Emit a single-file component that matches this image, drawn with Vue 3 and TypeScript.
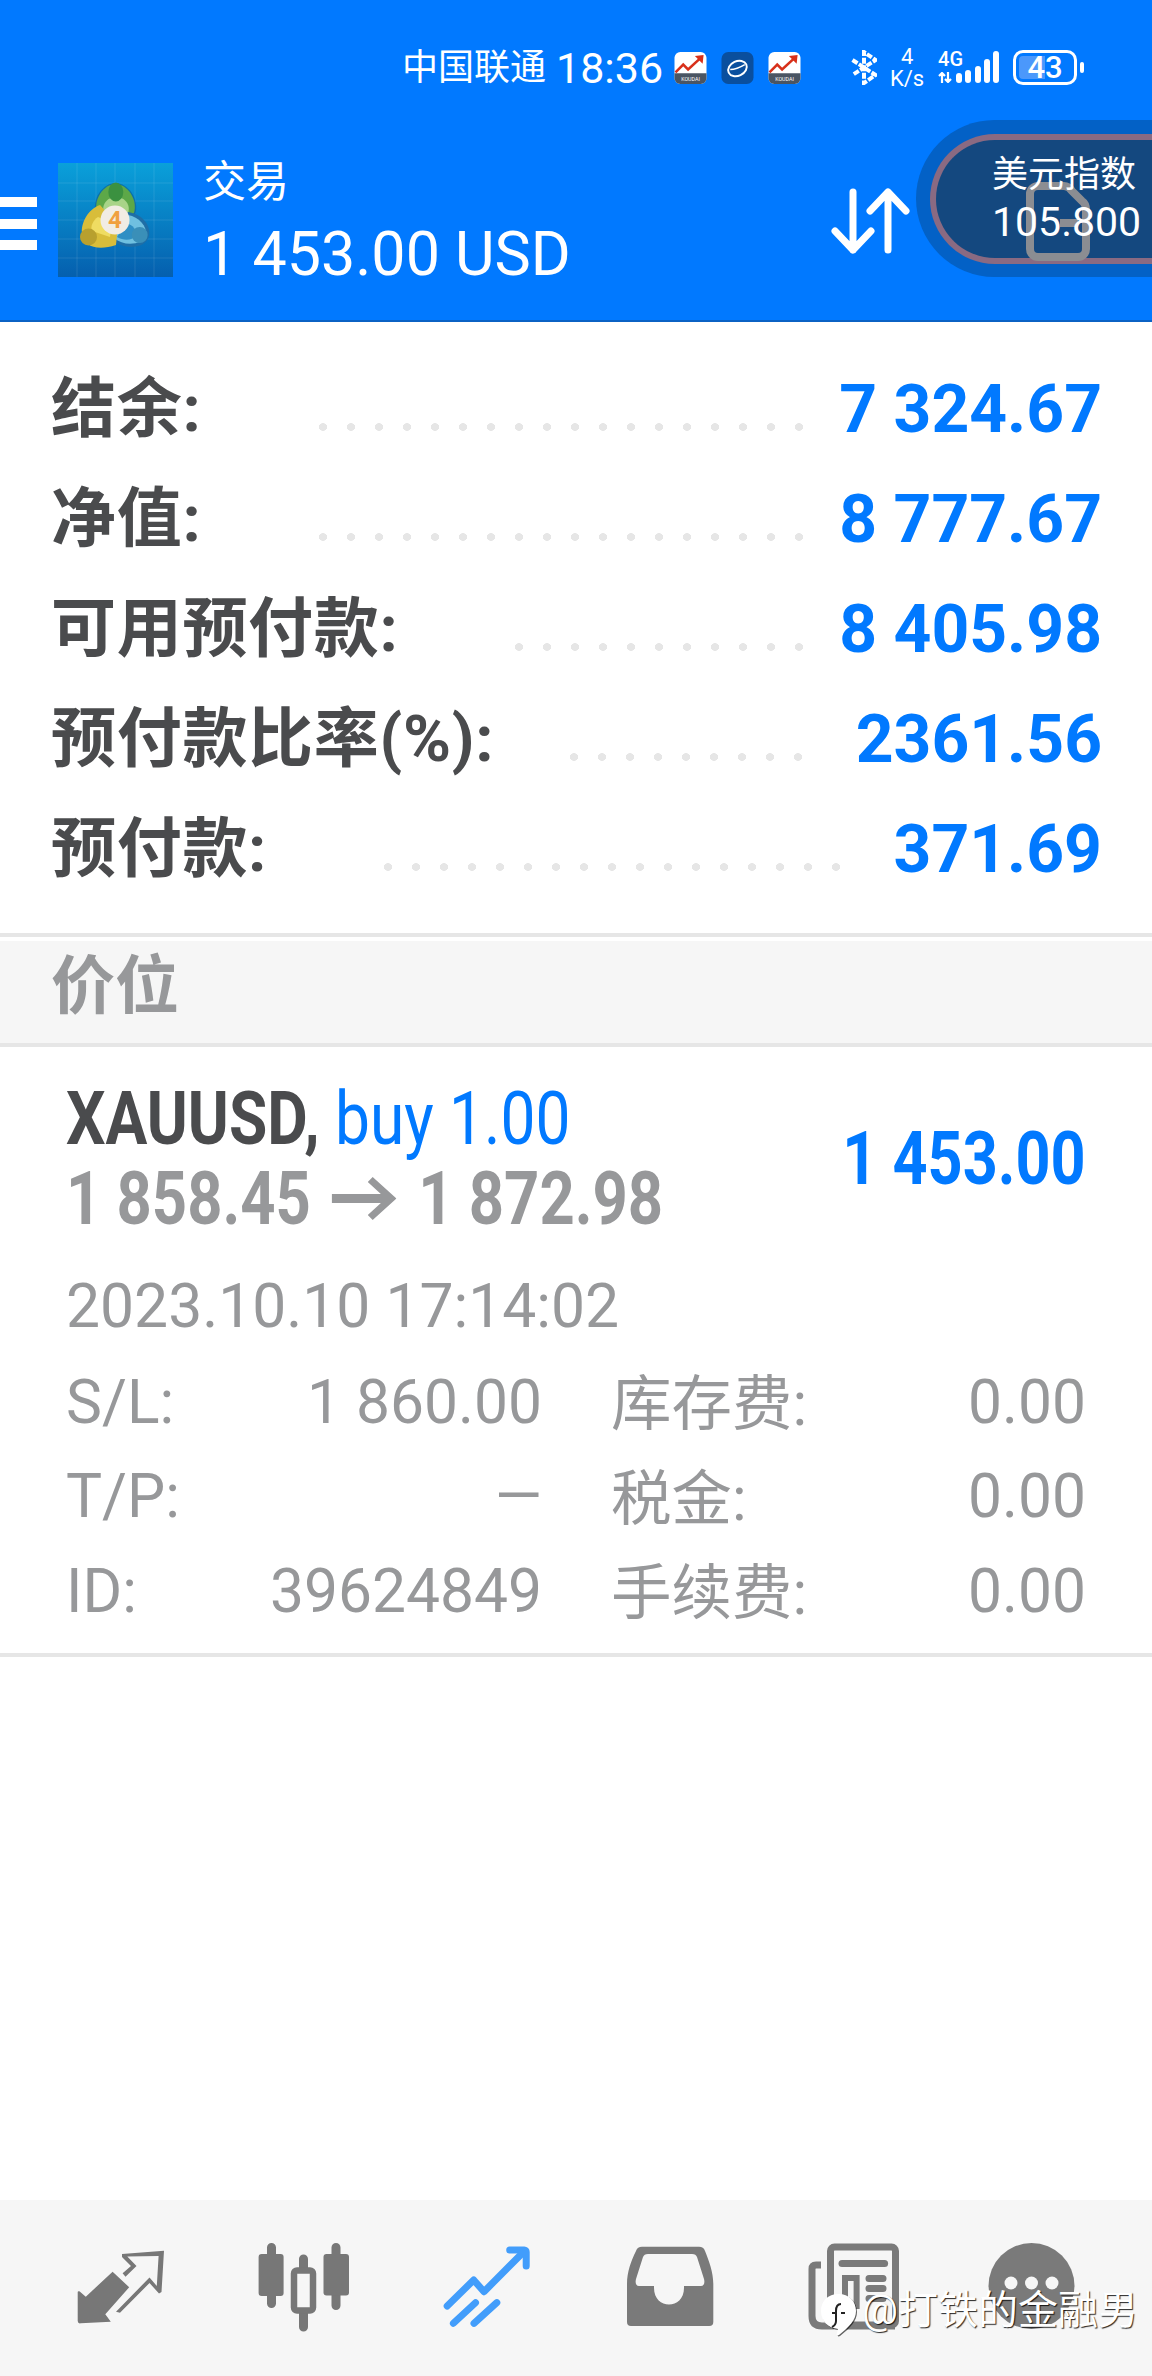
<template>
  <div class="page">
    <header class="top">
      <div class="status">
        <span class="carrier">中国联通</span>
        <span class="clock">18:36</span>
        <div class="apps">
          <svg v-for="(a, i) in statusApps" :key="i" class="app" viewBox="0 0 33 33">
            <template v-if="a === 'koudai'">
              <rect width="33" height="33" rx="6" fill="#fff" />
              <path d="M0 22h33v5a6 6 0 0 1-6 6H6a6 6 0 0 1-6-6z" fill="#4a5563" />
              <path d="M1 21l8-8 5 5L27 6" fill="none" stroke="#d8301a" stroke-width="2.6" />
              <path d="M21 4l9-1-1 9z" fill="#d8301a" />
              <text x="16.5" y="30" text-anchor="middle" class="koudai">KOUDAI</text>
            </template>
            <template v-else>
              <rect width="33" height="33" rx="7" fill="#0a4f9e" />
              <ellipse cx="16.5" cy="17" rx="10" ry="7.5" fill="none" stroke="#fff" stroke-width="2" transform="rotate(-25 16.5 17)" />
              <path d="M9 18c4 0 10-2 15-5" fill="none" stroke="#fff" stroke-width="1.6" />
            </template>
          </svg>
        </div>
        <svg class="bt" viewBox="0 0 26 35">
          <path d="M1.500 10l23 15-11.500 8V2l11.500 8L1.500 25" fill="none" stroke="#fff" stroke-width="4" stroke-dasharray="6 1.6" />
        </svg>
        <div class="speed"><span>4</span><span>K/s</span></div>
        <div class="signal">
          <span class="net-top">4G</span>
          <svg class="net-arrows" viewBox="0 0 14 11"><path d="M4 11V1M1 4l3-3 3 3M10 0v10M7 7l3 3 3-3" fill="none" stroke="#fff" stroke-width="2.2" /></svg>
          <div class="bars">
            <i v-for="h in signalBars" :key="h" :style="{ height: h + 'px' }"></i>
          </div>
        </div>
        <div class="battery"><span>43</span></div>
        <i class="battery-cap"></i>
      </div>

      <div class="bar">
        <div class="burger"><i></i><i></i><i></i></div>
        <svg class="logo" viewBox="0 0 115 114">
          <defs>
            <linearGradient id="logoBg" x1="0" y1="0" x2="0" y2="1">
              <stop offset="0" stop-color="#0aa0da" />
              <stop offset="1" stop-color="#055fae" />
            </linearGradient>
          </defs>
          <rect width="115" height="114" fill="url(#logoBg)" />
          <path d="M19 0v114M38 0v114M57 0v114M77 0v114M96 0v114M0 20h115M0 38h115M0 57h115M0 76h115M0 95h115" stroke="#fff" stroke-opacity=".1" />
          <path d="M38 52C33 36 45 20 57.500 20S82 36 77 52L57 66z" fill="#0d4f86" opacity=".5" />
          <path d="M39 50C35 36 46 21 57.500 21S80 36 76 50L57 64z" fill="#5da848" />
          <path d="M46 50c-3-8 3-16 12-16s15 8 12 16l-12 8z" fill="#a8d488" />
          <ellipse cx="57.800" cy="29" rx="7.500" ry="9.500" fill="#3b9140" />
          <path d="M70 49c14 2 23 13 21 24-3 13-26 15-38 3l8-16z" fill="#1f6ea6" />
          <path d="M70 52c11 2 19 11 18 20-3 10-22 12-32 3l7-13z" fill="#6fc0e0" />
          <path d="M68 60c7 2 11 7 10 12-4 6-12 6-19 2z" fill="#2f8fc4" />
          <circle cx="81.700" cy="72" r="8" fill="#3a8fb8" />
          <path d="M42 42c-12 4-19 18-18 28 1 14 16 18 34 12l2-20z" fill="#d8bd3a" />
          <path d="M40 54c-5 3-8 10-6 14l18 6 2-14z" fill="#efdc62" />
          <circle cx="30.500" cy="74" r="8.500" fill="#b8a02e" />
          <circle cx="57" cy="57" r="14.500" fill="#f1ece4" />
          <text x="57" y="65" text-anchor="middle" class="logo-four">4</text>
        </svg>
        <div class="account">
          <div class="account-name">交易</div>
          <div class="account-profit">1 453.00 USD</div>
        </div>
        <svg class="sort" viewBox="0 0 79 66">
          <path d="M22 4v58M4 43l18 19 18-19M57 62V4M39 23L57 4l18 19" fill="none" stroke="#fff" stroke-width="7" stroke-linecap="round" stroke-linejoin="round" />
        </svg>
        <div class="ticker-wrap">
          <div class="ticker">
            <svg class="sim" viewBox="0 0 64 79">
              <path d="M4 12a8 8 0 0 1 8-8h26c4 0 6 2 8 5l10 10c3 2 4 5 4 9v39a8 8 0 0 1-8 8H12a8 8 0 0 1-8-8zM34 41h18" fill="none" stroke="#8b8d92" stroke-width="8" />
            </svg>
            <div class="ticker-name">美元指数</div>
            <div class="ticker-value">105.800</div>
          </div>
        </div>
      </div>
    </header>

    <section class="summary">
      <div v-for="row in summary" :key="row.label" class="sum-row">
        <span class="sum-label">{{ row.label }}</span>
        <span class="dots" :style="{ width: row.dots * 28 + 'px', marginRight: row.gap + 'px' }"></span>
        <span class="sum-value">{{ row.value }}</span>
      </div>
    </section>

    <div class="band">价位</div>

    <section class="position">
      <div class="pos-head">
        <div class="pos-title">
          <div class="pos-line1"><b>XAUUSD,</b> <span>buy 1.00</span></div>
          <div class="pos-line2">
            <span>1 858.45</span>
            <svg class="pos-arrow" viewBox="0 0 79 43">
              <path d="M0 17H60L44 5 50 0 79 21.500 50 43 44 38 60 26H0z" fill="#97989a" />
            </svg>
            <span>1 872.98</span>
          </div>
        </div>
        <div class="pos-profit">1 453.00</div>
      </div>
      <div class="pos-time">2023.10.10 17:14:02</div>
      <div class="pos-grid">
        <template v-for="cell in details" :key="cell.left">
          <span>{{ cell.left }}</span>
          <span class="num">{{ cell.leftValue }}</span>
          <span class="right-label">{{ cell.right }}</span>
          <span class="num">{{ cell.rightValue }}</span>
        </template>
      </div>
    </section>

    <div class="spacer"></div>

    <nav class="tabs">
      <svg class="tab" viewBox="0 0 92 92">
        <path d="M2.700 50v29a2.500 2.500 0 0 0 3 2.300L35.800 79.700 30.300 72.300 54.200 45.300 37.600 29.700 10.800 54.700 5 49.700c-1-.6-2.300-.4-2.300.3z" fill="#777" />
        <path d="M47 12L89 8.700 86.500 50 84 51.500 74.500 41 45 70.700 41 69.700 74.500 35.500 81.800 44 83.600 14 52.300 14.500 61.500 24 50.500 34.700 47.600 31.300 56 24 47 15z" fill="#777" />
      </svg>
      <svg class="tab" viewBox="0 0 92 92">
        <path d="M13.500 5.500v56M45.500 17v68M78 5.500v58" stroke="#777" stroke-width="9" stroke-linecap="round" />
        <rect x=".6" y="12" width="25" height="42" rx="3" fill="#777" />
        <rect x="65.500" y="12" width="25.500" height="41.500" rx="3" fill="#777" />
        <rect x="36" y="28.500" width="19" height="40" rx="3" fill="#f6f6f6" stroke="#777" stroke-width="6.500" />
      </svg>
      <svg class="tab" viewBox="0 0 92 92">
        <path d="M6.200 64L32.700 38 43 49.700 83 9.500" fill="none" stroke="#429dfb" stroke-width="7" stroke-linecap="round" stroke-linejoin="round" />
        <path d="M68.700 8H83a2 2 0 0 1 2.200 2.200V24" fill="none" stroke="#429dfb" stroke-width="7" stroke-linecap="round" stroke-linejoin="round" />
        <path d="M12.400 81.300L34.500 60.700M33 81.300L55.800 60.700" fill="none" stroke="#429dfb" stroke-width="7" stroke-linecap="round" />
      </svg>
      <svg class="tab" viewBox="0 0 92 92">
        <path fill-rule="evenodd" d="M18 4.700H75C78 4.700 80 6 81 9 85 19 89.300 30 89.300 42V80A4 4 0 0 1 85.300 84H7A4 4 0 0 1 3 80V42C3 30 7 19 12 9 13 6 15 4.700 18 4.700ZM24 12C21 12 20 13 19 15L12 37C11 41 12 44 15 44H30V46C30 68 60 68 60 46V44H77C80 44 81 41 80 37L73 15C72 13 71 12 68 12Z" fill="#7a7a7a" />
      </svg>
      <svg class="tab" viewBox="0 0 92 92">
        <path d="M14 23H9Q5 23 5 27V74Q5 84 15 84H88" fill="none" stroke="#7a7a7a" stroke-width="7" />
        <rect x="23.500" y="5" width="65" height="78" rx="4" fill="none" stroke="#7a7a7a" stroke-width="7" />
        <path d="M35 21.500h42.600" stroke="#7a7a7a" stroke-width="7" stroke-linecap="round" />
        <path d="M38 36h11.600v28H38z" fill="none" stroke="#7a7a7a" stroke-width="6" />
        <path d="M62 36.500h14M62 46.500h14M62 56.500h14" stroke="#7a7a7a" stroke-width="7" stroke-linecap="round" />
      </svg>
      <svg class="tab" viewBox="0 0 92 92">
        <circle cx="41.500" cy="44" r="43" fill="#7a7a7a" />
        <circle cx="21" cy="41" r="6.500" fill="#f6f6f6" />
        <circle cx="41.500" cy="41" r="6.500" fill="#f6f6f6" />
        <circle cx="62" cy="41" r="6.500" fill="#f6f6f6" />
      </svg>
    </nav>

    <div class="watermark">
      <svg class="wm-icon" viewBox="0 0 37 44">
        <path d="M18.500 1C29 1 36 8 36 18c0 9-7 16-17 24-2 1-3 0-2-2l1-4C8 35 1 28 1 18 1 8 8 1 18.500 1z" fill="#fff" />
        <path d="M21 11c-4 0-5 3-5 7v10c0 3-2 5-4 6M12 20h4M21 20h4" fill="none" stroke="#222" stroke-width="2" />
      </svg>
      <span>@打铁的金融男</span>
    </div>
  </div>
</template>

<script setup lang="ts">
const statusApps = ['koudai', 'leaf', 'koudai']
const signalBars = [10, 13, 17, 24, 32]

// dots = how many leader dots the row shows, gap = space before the value
const summary = [
  { label: '结余:', value: '7 324.67', dots: 18, gap: 26 },
  { label: '净值:', value: '8 777.67', dots: 18, gap: 26 },
  { label: '可用预付款:', value: '8 405.98', dots: 11, gap: 26 },
  { label: '预付款比率(%):', value: '2361.56', dots: 9, gap: 44 },
  { label: '预付款:', value: '371.69', dots: 17, gap: 44 },
]

const details = [
  { left: 'S/L:', leftValue: '1 860.00', right: '库存费:', rightValue: '0.00' },
  { left: 'T/P:', leftValue: '—', right: '税金:', rightValue: '0.00' },
  { left: 'ID:', leftValue: '39624849', right: '手续费:', rightValue: '0.00' },
]
</script>

<style>
html,
body {
  margin: 0;
  background: #fff;
}
</style>

<style scoped>
.page {
  position: relative;
  width: 1152px;
  height: 2376px;
  display: flex;
  flex-direction: column;
  overflow: hidden;
  background: #fff;
  font-family: Roboto, "Noto Sans CJK SC", sans-serif;
}

.top {
  height: 320px;
  flex: none;
  background: #0179ff;
  border-bottom: 2px solid #0b62c4;
  color: #fff;
  display: flex;
  flex-direction: column;
}

.status {
  height: 134px;
  flex: none;
  display: flex;
  align-items: flex-start;
  padding: 50px 0 0 402px;
  box-sizing: border-box;
}

.carrier {
  font-size: 36px;
  line-height: 36px;
  white-space: nowrap;
}

.clock {
  font-size: 43px;
  line-height: 36px;
  margin: 0 0 0 10px;
}

.apps {
  display: flex;
  gap: 14px;
  margin: 2px 0 0 11px;
}

.app {
  width: 33px;
  height: 32px;
}

.koudai {
  font: 5.5px Roboto, sans-serif;
  fill: #fff;
}

.bt {
  width: 26px;
  height: 35px;
  margin-left: 50px;
  flex: none;
}

.speed {
  width: 34px;
  margin: -4px 0 0 13px;
  display: flex;
  flex-direction: column;
  align-items: center;
  font-size: 22px;
  line-height: 22px;
  white-space: nowrap;
}

.signal {
  position: relative;
  display: flex;
  align-items: flex-end;
  gap: 4px;
  width: 62px;
  height: 33px;
  margin-left: 14px;
}

.net-top {
  position: absolute;
  left: 0;
  top: -1px;
  font-size: 20px;
  font-weight: 500;
  line-height: 20px;
}

.net-arrows {
  display: block;
  width: 14px;
  height: 11px;
  flex: none;
}

.bars {
  display: flex;
  align-items: flex-end;
  gap: 3.3px;
}

.bars i {
  display: block;
  width: 6px;
  border-radius: 3px;
  background: #fff;
}

.battery {
  width: 64px;
  height: 35px;
  margin-left: 13px;
  padding: 3px;
  box-sizing: border-box;
  border: 3px solid #fff;
  border-radius: 10px;
  flex: none;
}

.battery span {
  display: block;
  height: 23px;
  border-radius: 4px;
  background: linear-gradient(90deg, #4b98fb 50%, transparent 50%);
  font-size: 31px;
  font-weight: 500;
  line-height: 23px;
  text-align: center;
}

.battery-cap {
  display: block;
  width: 4px;
  height: 11px;
  margin: 12px 0 0 3px;
  border-radius: 2px;
  background: #fff;
}

.bar {
  flex: 1;
  display: flex;
  align-items: flex-start;
  min-height: 0;
  padding-top: 29px;
}

.burger {
  width: 37px;
  flex: none;
  display: flex;
  flex-direction: column;
  gap: 11.500px;
  margin-top: 34px;
}

.burger i {
  display: block;
  height: 10px;
  background: #fff;
}

.logo {
  width: 115px;
  height: 114px;
  margin-left: 21px;
  flex: none;
}

.account {
  margin: -5px 0 0 30px;
  flex: none;
  width: 600px;
}

.account-name {
  font-size: 43px;
  line-height: 48px;
}

.account-profit {
  font-size: 61px;
  line-height: 68px;
  margin-top: 14px;
  white-space: nowrap;
}

.sort {
  position: absolute;
  left: 831px;
  top: 188px;
  width: 79px;
  height: 66px;
}

.ticker-wrap {
  position: absolute;
  left: 916px;
  top: 120px;
  width: 260px;
  height: 157px;
  box-sizing: border-box;
  padding: 14px 0 0 14px;
  border-radius: 79px 0 0 79px;
  background: #0361c6;
}

.ticker {
  position: relative;
  height: 130px;
  box-sizing: border-box;
  padding: 13px 0 0 56px;
  border: 6px solid #8a6a82;
  border-right: 0;
  border-radius: 65px 0 0 65px;
  background: #14487f;
  white-space: nowrap;
}

.sim {
  position: absolute;
  left: 90px;
  top: 42px;
  width: 64px;
  height: 79px;
}

.ticker-name,
.ticker-value {
  position: relative;
  line-height: 44px;
}

.ticker-name {
  font-size: 36px;
}

.ticker-value {
  font-size: 41px;
  margin-top: 3px;
}

.summary {
  flex: none;
  padding: 32px 50px 0 51px;
  height: 615px;
  box-sizing: border-box;
  border-bottom: 4px solid #e6e6e6;
}

.sum-row {
  height: 110px;
  display: flex;
  align-items: center;
}

.sum-label {
  font-size: 65px;
  font-weight: 700;
  letter-spacing: .7px;
  color: #4a4b4d;
  white-space: nowrap;
  line-height: 80px;
  margin-right: auto;
}

.dots {
  flex: none;
  height: 8px;
  margin-top: 36px;
  background: radial-gradient(ellipse 4.500px 4px, #e6e6e6 90%, transparent 100%) right center / 28px 8px repeat-x;
}

.sum-value {
  font-size: 66px;
  font-weight: 700;
  color: #0179ff;
  white-space: nowrap;
}

.band {
  flex: none;
  height: 106px;
  margin-top: 4px;
  padding-left: 51px;
  box-sizing: border-box;
  background: #f6f6f6;
  border-bottom: 4px solid #e6e6e6;
  color: #97989a;
  font-size: 64px;
  font-weight: 700;
  line-height: 92px;
}

.position {
  flex: none;
  padding: 31px 66px 0;
  height: 610px;
  box-sizing: border-box;
  border-bottom: 4px solid #e6e6e6;
  color: #97989a;
}

.pos-head {
  display: flex;
  justify-content: space-between;
  align-items: center;
}

.pos-line1,
.pos-line2 {
  transform-origin: left center;
  white-space: nowrap;
  font-size: 75px;
  line-height: 80px;
}

.pos-line1 {
  transform: scaleX(.83);
}

.pos-line1 b {
  color: #4a4b4d;
}

.pos-line1 span {
  color: #0179ff;
}

.pos-line2 {
  display: flex;
  align-items: center;
  transform: scaleX(.82);
  font-weight: 700;
}

.pos-arrow {
  width: 79px;
  height: 43px;
  margin: 0 27px 0 25px;
  flex: none;
}

.pos-title {
  width: 500px;
}

.pos-profit {
  color: #0179ff;
  font-size: 75px;
  font-weight: 700;
  transform: scaleX(.815);
  transform-origin: right center;
}

.pos-time {
  font-size: 60.600px;
  line-height: 66px;
  margin-top: 36px;
}

.pos-grid {
  display: grid;
  grid-template-columns: 130px 346px 244px 300px;
  grid-auto-rows: 94.500px;
  margin-top: 15px;
  align-items: center;
  font-size: 60.500px;
  white-space: nowrap;
}

.num {
  text-align: right;
}

.right-label {
  padding: 0 0 7px 69px;
}

.spacer {
  flex: 1;
}

.tabs {
  flex: none;
  height: 176px;
  padding: 42px 0 0 29px;
  box-sizing: border-box;
  background: #f6f6f6;
  display: grid;
  grid-template-columns: repeat(6, 183px);
  justify-items: center;
  align-items: start;
}

.tab {
  width: 92px;
  height: 92px;
  display: block;
  overflow: visible;
}

.watermark {
  position: absolute;
  left: 820px;
  top: 2293px;
  display: flex;
  align-items: flex-start;
  gap: 5px;
  color: #fff;
  font-size: 40px;
  line-height: 36px;
  text-shadow: 1px 1px 1px rgba(0, 0, 0, .85);
  white-space: nowrap;
}

.wm-icon {
  width: 37px;
  height: 44px;
  filter: drop-shadow(1px 1px 0 rgba(0, 0, 0, .6));
}

.logo-four {
  font: 700 24px Roboto, sans-serif;
  fill: #f0a040;
}
</style>
